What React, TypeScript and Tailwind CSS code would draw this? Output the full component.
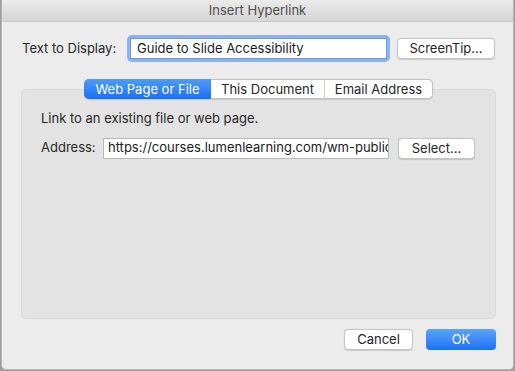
import React from "react";

const font = { fontFamily: "Inter, 'Liberation Sans', sans-serif" };

function PushButton({ label, className = "" }: { label: string; className?: string }) {
  return (
    <button
      type="button"
      className={`h-[21px] rounded-[4px] border border-[#c4c4c4] bg-white text-[13px] leading-none text-[#262626] shadow-[0_0.5px_1px_rgba(0,0,0,0.15)] ${className}`}
    >
      {label}
    </button>
  );
}

export default function App() {
  return (
    <div className="w-[515px] h-[371px] bg-[#9c9c9c] overflow-hidden" style={font}>
      <div className="ml-[1px] w-[513px] h-[370px] flex flex-col rounded-b-[5px] border-l border-r border-b border-[#b5b5b5] bg-[#ececec]">
        {/* title bar */}
        <div className="h-[22px] flex items-center justify-center border-b border-[#c9c9c9] bg-gradient-to-b from-[#ebebeb] to-[#d5d5d5] text-[13px] text-[#4d4d4d]">
          Insert Hyperlink
        </div>

        {/* text to display */}
        <div className="flex items-center mt-[13px] pl-[20px] pr-[18px]">
          <span className="text-[13px] text-[#262626] w-[105px]">Text to Display:</span>
          <div className="w-[263px] h-[27px] rounded-[5px] bg-[#8db3ef] p-[3px]">
            <div className="h-full bg-white border border-[#6f9ae0] flex items-center pl-[6px] text-[13px] text-[#1a1a1a]">
              Guide to Slide Accessibility
            </div>
          </div>
          <PushButton label="ScreenTip..." className="ml-auto w-[98px]" />
        </div>

        {/* tabbed group */}
        <div className="mt-[17px] ml-[19px] mr-[17px] flex flex-col items-center">
          <div className="relative z-10 -mb-[10px] flex h-[20px] rounded-[5px] border border-[#c0c0c0] bg-white text-[13px] leading-none shadow-[0_0.5px_1px_rgba(0,0,0,0.12)]">
            <div className="w-[127px] -my-[1px] -ml-[1px] flex items-center justify-center rounded-l-[5px] bg-gradient-to-b from-[#4d9cfa] to-[#1b6ff2] text-white">
              Web Page or File
            </div>
            <div className="w-[114px] flex items-center justify-center text-[#262626] border-r border-[#d0d0d0]">
              This Document
            </div>
            <div className="w-[107px] flex items-center justify-center text-[#262626]">
              Email Address
            </div>
          </div>
          <div className="w-full h-[230px] rounded-[5px] border border-[#dadada] bg-[#e3e3e3] pt-[19px] pl-[19px]">
            <p className="text-[13px] text-[#262626]">Link to an existing file or web page.</p>
            <div className="flex items-center mt-[9px]">
              <span className="text-[13px] text-[#262626] w-[62px]">Address:</span>
              <div className="w-[286px] h-[21px] bg-white border border-[#b8b8b8] flex items-center pl-[4px] overflow-hidden whitespace-nowrap text-[13px] text-[#1a1a1a]">
                https://courses.lumenlearning.com/wm-publics
              </div>
              <PushButton label="Select..." className="ml-[9px] w-[77px]" />
            </div>
          </div>
        </div>

        {/* bottom buttons */}
        <div className="flex justify-end gap-[13px] mt-[10px] pr-[17px]">
          <PushButton label="Cancel" className="w-[69px]" />
          <button
            type="button"
            className="w-[70px] h-[21px] rounded-[4px] bg-gradient-to-b from-[#5aa4fb] to-[#1c70f3] text-[13px] leading-none text-white"
          >
            OK
          </button>
        </div>
      </div>
    </div>
  );
}
